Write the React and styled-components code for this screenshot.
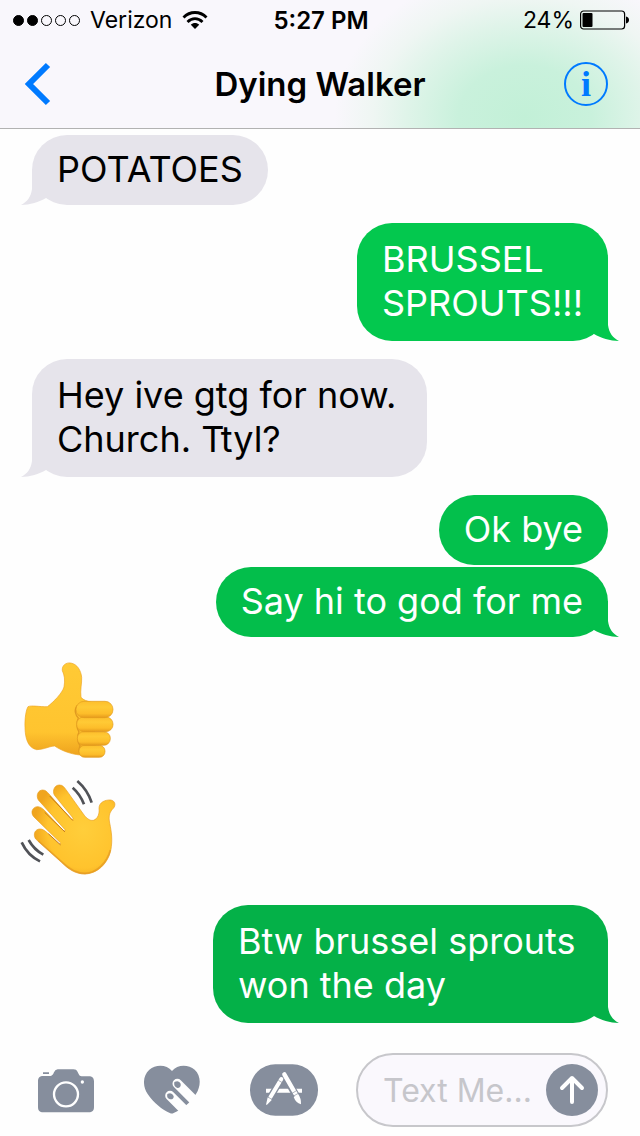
import React from 'react';
import styled, { createGlobalStyle } from 'styled-components';

const GlobalStyle = createGlobalStyle`
  * {
    box-sizing: border-box;
  }

  body {
    margin: 0;
    background: #fefefe;
    color: #000;
    font-family: Inter, 'Liberation Sans', sans-serif;
  }

  button {
    display: flex;
    align-items: center;
    justify-content: center;
    padding: 0;
    border: none;
    background: none;
    color: inherit;
    font: inherit;
    cursor: pointer;
  }
`;

// Page layout
const Screen = styled.div`
  display: flex;
  flex-direction: column;
  min-height: 100vh;
`;

const Header = styled.header`
  border-bottom: 1px solid #b2b2b2;
  background: radial-gradient(ellipse 190px 150px at 82% 92%, #c2f0d7 0%, #c9f1dc 35%, #dff4e9 62%, #eff6f3 80%, rgba(249, 247, 252, 0) 100%), #f9f7fc;
`;

// Status bar
const StatusBar = styled.div`
  display: grid;
  grid-template-columns: 1fr auto 1fr;
  align-items: center;
  height: 40px;
  padding: 0 11px 0 13px;
  font-size: 23px;
`;

const StatusGroup = styled.div`
  display: flex;
  align-items: center;
  justify-content: ${({ $end }) => ($end ? 'flex-end' : 'flex-start')};
  gap: ${({ $gap }) => $gap}px;
`;

const Signal = styled.div`
  display: flex;
  gap: 3px;
`;

const Dot = styled.span`
  width: 11px;
  height: 11px;
  border: 1px solid #000;
  border-radius: 50%;
  background: ${({ $on }) => ($on ? '#000' : 'transparent')};
`;

const Time = styled.time`
  font-size: 24px;
  font-weight: 600;
`;

// Navigation bar
const NavBar = styled.nav`
  display: grid;
  grid-template-columns: 1fr auto 1fr;
  align-items: center;
  height: 88px;
  padding: 0 32px;
`;

const BackButton = styled.button`
  justify-self: start;
  margin-left: -8px;
  color: #007aff;
`;

const Title = styled.h1`
  margin: 0;
  font-size: 33px;
  font-weight: 600;
`;

const InfoButton = styled.button`
  justify-self: end;
  width: 44px;
  height: 44px;
  border: 2px solid #007aff;
  border-radius: 50%;
  color: #007aff;
  font-family: 'Liberation Serif', serif;
  font-size: 36px;
  font-weight: bold;
  line-height: 1;
`;

// Conversation
const Conversation = styled.main`
  display: flex;
  flex: 1;
  flex-direction: column;
  gap: 18px;
  padding: 6px 20px 18px;
`;

const Group = styled.div`
  display: flex;
  flex-direction: column;
  align-items: ${({ $sent }) => ($sent ? 'flex-end' : 'flex-start')};
  gap: ${({ $gap }) => $gap || 0}px;
`;

const BubbleBody = styled.p`
  position: relative;
  max-width: 395px;
  margin: 0 12px;
  padding: ${({ $tall }) => ($tall ? '14px 25px 16px' : '12px 25px 14px')};
  border-radius: 35px;
  background: ${({ $color }) => $color};
  color: ${({ $sent }) => ($sent ? '#fff' : '#000')};
  font-size: 36px;
  line-height: 44px;
  white-space: pre-line;
`;

const Tail = styled.svg`
  position: absolute;
  bottom: 0;
  ${({ $sent }) => ($sent ? 'right: -12px;' : 'left: -12px;')}
  width: 36px;
  height: 36px;
  transform: ${({ $sent }) => ($sent ? 'none' : 'scaleX(-1)')};
`;

const Emoji = styled.svg`
  display: block;
  width: 100px;
  height: 116px;
`;

// Message composer
const Composer = styled.form`
  display: flex;
  align-items: center;
  gap: 50px;
  height: 92px;
  padding: 0 32px 0 38px;
  color: #868e9d;
`;

const Field = styled.div`
  display: flex;
  flex: 1;
  align-items: center;
  min-width: 0;
  height: 74px;
  margin-left: -12px;
  padding: 0 8px 0 25px;
  border: 2px solid #c7c7cb;
  border-radius: 37px;
  background: #faf8fd;
`;

const TextInput = styled.input`
  flex: 1;
  min-width: 0;
  padding: 0;
  border: none;
  outline: none;
  background: transparent;
  color: #000;
  font: inherit;
  font-size: 32px;

  &::placeholder {
    color: #c6c6cb;
    opacity: 1;
  }
`;

const SendButton = styled.button`
  flex: none;
`;

const Bubble = ({ sent, tall, tail, color, children }) => (
  <BubbleBody $sent={sent} $tall={tall} $color={color}>
    {tail && (
      <Tail $sent={sent} viewBox="0 0 36 36" aria-hidden="true">
        <path d="M0 0H24V20C25 28 29 33 35 36C26 36 17 33 10 29L0 24Z" fill={color} />
      </Tail>
    )}
    {children}
  </BubbleBody>
);

const WifiIcon = () => (
  <svg width="26" height="20" viewBox="0 0 26 20" aria-label="Wi-Fi" role="img">
    <g fill="none" stroke="#000" strokeWidth="2.8">
      <path d="M1.5 7.5C8 .8 18 .8 24.5 7.5" />
      <path d="M5.5 12C10 7.6 16 7.6 20.5 12" />
    </g>
    <path d="M8.8 14.8C11 12.4 15 12.4 17.2 14.8L13 19Z" />
  </svg>
);

const BatteryIcon = () => (
  <svg width="49" height="20" viewBox="0 0 49 20" aria-hidden="true">
    <rect x=".6" y="1" width="44" height="18" rx="3" fill="none" stroke="#000" strokeWidth="1.2" />
    <rect x="2.5" y="3" width="10" height="14" rx="1" />
    <path d="M46 6.5C50 7 50 13 46 13.5Z" />
  </svg>
);

const ThumbsUp = () => (
  <Emoji viewBox="60 45 300 348" role="img" aria-label="Thumbs up">
    <defs>
      <linearGradient id="thumb" x1="0" y1="0" x2="0" y2="1">
        <stop offset="0" stopColor="#ffca35" />
        <stop offset=".75" stopColor="#ffc42f" />
        <stop offset="1" stopColor="#eea31e" />
      </linearGradient>
      <linearGradient id="finger" x1="0" y1="0" x2="0" y2="1">
        <stop offset="0" stopColor="#fdbf2c" />
        <stop offset=".35" stopColor="#ffca35" />
        <stop offset=".75" stopColor="#fdbd2a" />
        <stop offset="1" stopColor="#e69b1c" />
      </linearGradient>
    </defs>
    <path
      d="M84 200C95 195 118 201 142 200C160 187 187 159 192 141C196 120 193 105 187 92C185 76 198 67 212 69C232 72 243 92 245 112C246 130 240 150 243 172C250 181 262 183 275 187L290 340L240 345C210 342 183 331 164 318C150 318 135 328 110 329C92 325 76 310 75 262C74 235 78 210 84 200Z"
      fill="url(#thumb)"
      stroke="#eda522"
      strokeWidth="2"
    />
    <path d="M232 196C220 210 228 228 235 234C228 248 230 266 237 276C229 289 233 308 240 317C235 330 237 339 243 345" fill="none" stroke="#e09a20" strokeWidth="4" />
    <g fill="url(#finger)" stroke="#e39c1e" strokeWidth="2">
      <rect x="237" y="316" width="78" height="36" rx="17" />
      <rect x="232" y="275" width="99" height="41" rx="20" />
      <rect x="230" y="231" width="109" height="44" rx="21" />
      <rect x="228" y="184" width="111" height="49" rx="24" />
    </g>
  </Emoji>
);

const WavingHand = () => (
  <Emoji viewBox="60 18 300 348" role="img" aria-label="Waving hand">
    <defs>
      <radialGradient id="palm" cx=".62" cy=".5" r=".6">
        <stop offset="0" stopColor="#ffce3b" />
        <stop offset=".72" stopColor="#ffc32d" />
        <stop offset="1" stopColor="#f0a51e" />
      </radialGradient>
    </defs>
    <path
      d="M107 222C98 208 105 192 120 192C128 192 134 197 140 202L176 236Q182 240 182 234L101 155C89 140 100 124 114 125C122 126 127 130 133 136L190 197Q196 201 195 194L115 105C107 90 115 75 128 75C136 75 141 80 147 87L213 162Q220 167 219 159L163 90C156 75 165 60 178 60C188 60 192 66 198 74L250 147C258 158 268 168 280 166C294 162 299 145 297 130C297 112 315 104 332 105C346 107 348 121 340 130C330 140 326 150 328 168C332 190 338 215 334 245C330 285 300 325 255 327C225 327 205 312 185 292Z"
      fill="url(#palm)"
      stroke="#e99f20"
      strokeWidth="2"
      strokeLinejoin="round"
    />
    <path d="M146 207L181 239M135 143L194 200M150 94L218 166" fill="none" stroke="#c57a18" strokeWidth="3" strokeLinecap="round" />
    <path d="M115 228L187 292C207 312 227 325 255 325C292 323 321 292 331 255" fill="none" stroke="#df9320" strokeWidth="5" opacity=".6" />
    <g fill="none" stroke="#505257" strokeWidth="8">
      <path d="M218 68Q241 88 252 118" />
      <path d="M232 48Q263 75 275 113" />
      <path d="M86 225Q102 254 130 269" />
      <path d="M65 232Q83 271 120 289" />
    </g>
  </Emoji>
);

const CameraIcon = () => (
  <svg width="56" height="45" viewBox="54 80 168 135" aria-hidden="true">
    <path
      d="M69 93H87V98H69ZM70 104H88C98 104 99 98 103 91C107 85 111 84 117 84H160C167 84 170 86 173 92C177 100 178 105 188 105H206C217 105 222 110 222 121V197C222 208 217 213 206 213H70C59 213 54 208 54 197V120C54 109 59 104 70 104Z"
      fill="currentColor"
    />
    <circle cx="138" cy="159" r="36" fill="none" stroke="#fff" strokeWidth="7" />
    <circle cx="187" cy="122" r="5" fill="#fff" />
  </svg>
);

const HeartIcon = () => (
  <svg width="56" height="50" viewBox="372 78 168 150" aria-hidden="true">
    <path
      d="M456 96C440 76 407 76 388 92C367 111 368 143 383 165C401 191 426 212 451 223Q456 225 461 222C486 211 511 192 528 165C543 141 544 110 524 92C505 76 472 76 456 96Z"
      fill="currentColor"
    />
    <path d="M450 170L510 230M472 134L540 202" stroke="#fefefe" strokeWidth="29" strokeLinecap="round" />
    <path d="M442 165Q455 158 461 171Q462 182 450 181Q439 178 442 165ZM463 129Q477 122 482 134Q484 146 472 147Q460 143 463 129Z" fill="currentColor" />
  </svg>
);

const AppsIcon = () => (
  <svg width="68" height="52" viewBox="90 73 204 156" aria-hidden="true">
    <rect x="90" y="74" width="204" height="154" rx="76" fill="currentColor" />
    <path d="M138 153H246" stroke="#fff" strokeWidth="12" />
    <path d="M191 102L229 169" stroke="currentColor" strokeWidth="22" />
    <path d="M184 118L149 176" stroke="currentColor" strokeWidth="20" />
    <path d="M184 118L151 173" stroke="#fff" strokeWidth="12" strokeLinecap="round" />
    <path d="M193 104L228 165" stroke="#fff" strokeWidth="13" strokeLinecap="round" />
    <path d="M143 173L156 180L141 195H138ZM221 172L235 164Q244 177 243 194Q227 189 221 172Z" fill="#fff" />
    <path d="M175 122L187 129M142 171L157 180M216 161L231 152M219 170L235 161" stroke="currentColor" strokeWidth="2" />
  </svg>
);

const SendIcon = () => (
  <svg width="52" height="52" viewBox="0 0 52 52" aria-hidden="true">
    <circle cx="26" cy="26" r="26" fill="#868e9d" />
    <path d="M26 38V14M16 24L26 14L36 24" fill="none" stroke="#fff" strokeWidth="4" strokeLinecap="round" strokeLinejoin="round" />
  </svg>
);

const App = () => {
  return (
    <>
      <GlobalStyle />
      <Screen>
        <Header>
          <StatusBar>
            <StatusGroup $gap={10}>
              <Signal>
                {[1, 2, 3, 4, 5].map((n) => (
                  <Dot key={n} $on={n <= 2} />
                ))}
              </Signal>
              <span>Verizon</span>
              <WifiIcon />
            </StatusGroup>
            <Time>5:27 PM</Time>
            <StatusGroup $end $gap={6}>
              <span>24%</span>
              <BatteryIcon />
            </StatusGroup>
          </StatusBar>

          <NavBar>
            <BackButton aria-label="Back">
              <svg width="27" height="44" viewBox="0 0 27 44">
                <path d="M24 3L5 22L24 41" fill="none" stroke="currentColor" strokeWidth="6" />
              </svg>
            </BackButton>
            <Title>Dying Walker</Title>
            <InfoButton aria-label="Details">i</InfoButton>
          </NavBar>
        </Header>

        <Conversation>
          <Group>
            <Bubble tail color="#e6e4eb">POTATOES</Bubble>
          </Group>
          <Group $sent>
            <Bubble sent tall tail color="#03c84e">{'BRUSSEL\nSPROUTS!!!'}</Bubble>
          </Group>
          <Group>
            <Bubble tall tail color="#e6e4eb">Hey ive gtg for now. Church. Ttyl?</Bubble>
          </Group>
          <Group $sent $gap={2}>
            <Bubble sent color="#03c04c">Ok bye</Bubble>
            <Bubble sent tail color="#03be4b">Say hi to god for me</Bubble>
          </Group>
          <Group>
            <ThumbsUp />
            <WavingHand />
          </Group>
          <Group $sent>
            <Bubble sent tall tail color="#04b148">Btw brussel sprouts won the day</Bubble>
          </Group>
        </Conversation>

        <Composer onSubmit={(e) => e.preventDefault()}>
          <button type="button" aria-label="Camera">
            <CameraIcon />
          </button>
          <button type="button" aria-label="Digital Touch">
            <HeartIcon />
          </button>
          <button type="button" aria-label="Apps">
            <AppsIcon />
          </button>
          <Field>
            <TextInput type="text" aria-label="Message" placeholder="Text Me..." />
            <SendButton type="submit" aria-label="Send">
              <SendIcon />
            </SendButton>
          </Field>
        </Composer>
      </Screen>
    </>
  );
};

export default App;
